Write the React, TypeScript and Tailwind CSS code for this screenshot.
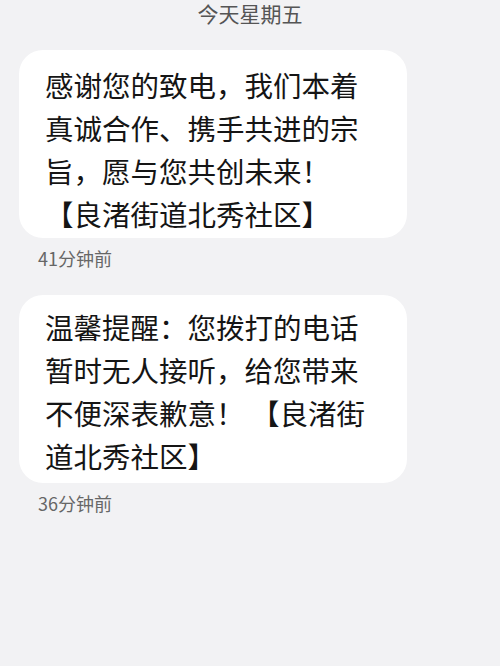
const font = {
  fontFamily: '"Noto Sans CJK SC", "Noto Sans", sans-serif',
};

const messages = [
  {
    lines: [
      "感谢您的致电，我们本着",
      "真诚合作、携手共进的宗",
      "旨，愿与您共创未来！",
      "【良渚街道北秀社区】",
    ],
    time: "41分钟前",
    pad: "pt-[13px] pb-[5px]",
  },
  {
    lines: [
      "温馨提醒：您拨打的电话",
      "暂时无人接听，给您带来",
      "不便深表歉意！ 【良渚街",
      "道北秀社区】",
    ],
    time: "36分钟前",
    pad: "pt-[10px] pb-[8px]",
  },
];

export default function App() {
  return (
    <div
      className="w-[500px] h-[666px] bg-[#f2f2f4] flex flex-col overflow-hidden"
      style={font}
    >
      <div className="mt-[2px] h-[22px] leading-[22px] text-center text-[21px] text-[#555]">
        今天星期五
      </div>

      <div className="flex flex-col mt-[26px]">
        {messages.map((m, i) => (
          <div key={i} className={i > 0 ? "mt-[25px]" : ""}>
            <div
              className={`ml-[19px] w-[388px] h-[188px] bg-white rounded-[24px] pl-[26px] ${m.pad}`}
            >
              {m.lines.map((l, j) => (
                <div
                  key={j}
                  className="text-[28.5px] leading-[43px] text-[#151515] whitespace-pre"
                >
                  {l}
                </div>
              ))}
            </div>
            <div className="ml-[38px] mt-[8px] h-[24px] leading-[24px] text-[18px] text-[#666]">
              {m.time}
            </div>
          </div>
        ))}
      </div>
    </div>
  );
}
